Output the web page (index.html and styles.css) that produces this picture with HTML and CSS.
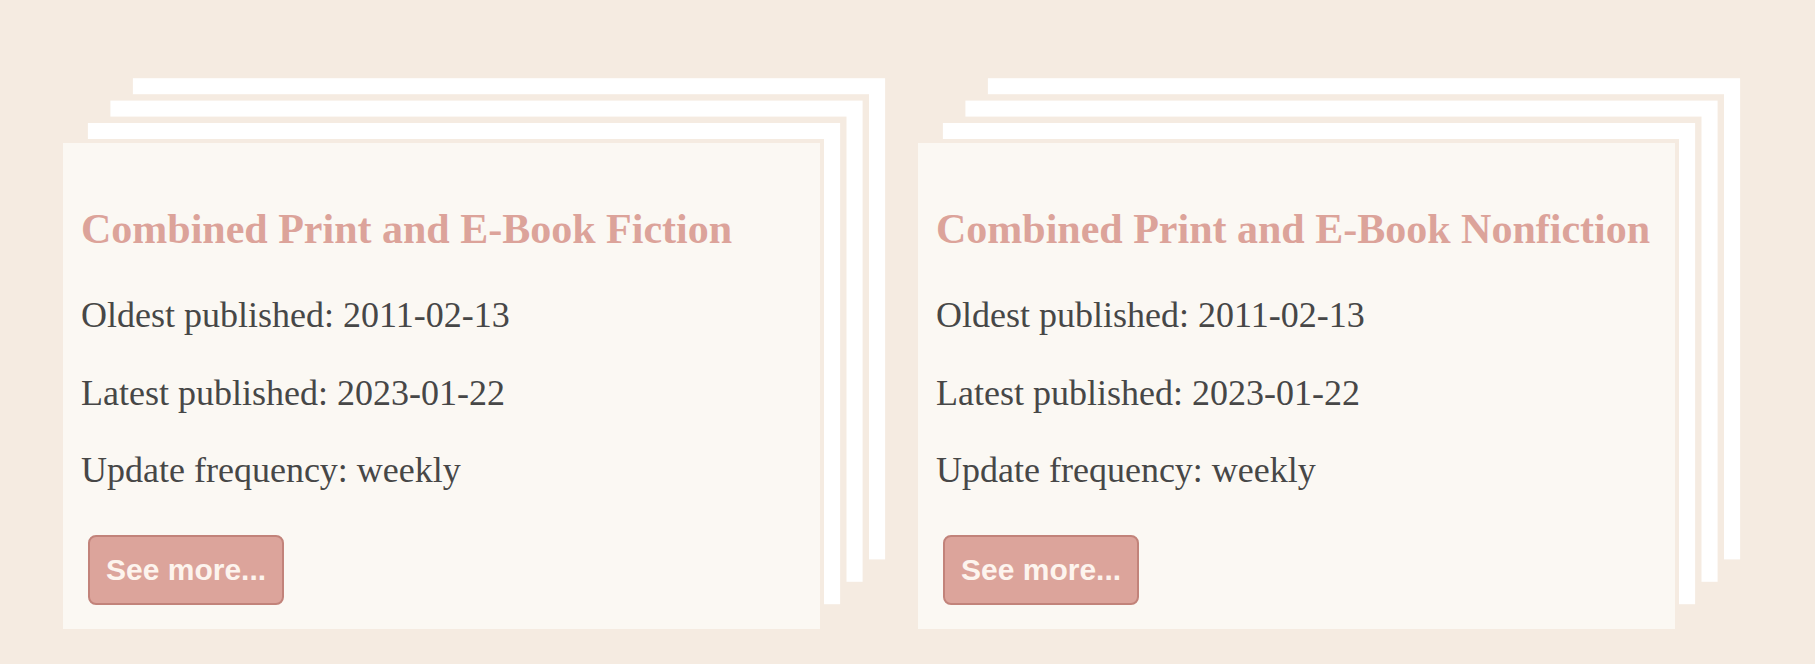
FILE: index.html
```html
<!DOCTYPE html>
<html lang="en">
<head>
<meta charset="utf-8">
<title>Best Sellers Lists</title>
<link rel="stylesheet" href="styles.css">
</head>
<body>
<main class="shelf">
  <article class="card">
    <h3 class="card-title">Combined Print and E-Book Fiction</h3>
    <p class="card-line">Oldest published: 2011-02-13</p>
    <p class="card-line">Latest published: 2023-01-22</p>
    <p class="card-line">Update frequency: weekly</p>
    <div class="card-actions"><button class="more-btn" type="button">See more...</button></div>
  </article>
  <article class="card">
    <h3 class="card-title">Combined Print and E-Book Nonfiction</h3>
    <p class="card-line">Oldest published: 2011-02-13</p>
    <p class="card-line">Latest published: 2023-01-22</p>
    <p class="card-line">Update frequency: weekly</p>
    <div class="card-actions"><button class="more-btn" type="button">See more...</button></div>
  </article>
  <article class="card">
    <h3 class="card-title">Hardcover Fiction</h3>
    <p class="card-line">Oldest published: 2008-06-08</p>
    <p class="card-line">Latest published: 2023-01-22</p>
    <p class="card-line">Update frequency: weekly</p>
    <div class="card-actions"><button class="more-btn" type="button">See more...</button></div>
  </article>
  <article class="card">
    <h3 class="card-title">Hardcover Nonfiction</h3>
    <p class="card-line">Oldest published: 2008-06-08</p>
    <p class="card-line">Latest published: 2023-01-22</p>
    <p class="card-line">Update frequency: weekly</p>
    <div class="card-actions"><button class="more-btn" type="button">See more...</button></div>
  </article>
</main>
</body>
</html>
```
FILE: styles.css
```css
html, body {
  margin: 0;
  padding: 0;
  background: #f5ebe1;
}

body {
  font-family: "Liberation Serif", "Times New Roman", serif;
  color: #474747;
}

.shelf {
  display: grid;
  grid-template-columns: repeat(2, 765px);
  column-gap: 90px;
  row-gap: 92px;
  padding: 139px 0 0 59px;
}

.card {
  background: #fbf8f3;
  border: 4px solid #f5ebe1;
  padding: 20px 18px 18px;
  box-shadow:
    22.5px -22.4px 0 -6.4px #ffffff,
    22.5px -22.4px 0 0 #f5ebe1,
    45px -44.8px 0 -6.4px #ffffff,
    45px -44.8px 0 0 #f5ebe1,
    67.5px -67.2px 0 -6.4px #ffffff;
}

.card-title {
  font-size: 42px;
  line-height: 48px;
  font-weight: bold;
  color: #dca39a;
  margin: 42px 0;
  white-space: nowrap;
}

.card-line {
  font-size: 36px;
  line-height: 41.5px;
  margin: 36px 0;
}

.card-actions {
  display: flex;
}

.more-btn {
  margin: 7.5px 7px 5.5px;
  padding: 16px;
  font-family: "Liberation Sans", Arial, sans-serif;
  font-size: 30px;
  font-weight: bold;
  line-height: 34px;
  color: #fdf4ee;
  background: #dca49b;
  border: 2px solid #c2837a;
  border-radius: 8px;
  cursor: pointer;
}
```
